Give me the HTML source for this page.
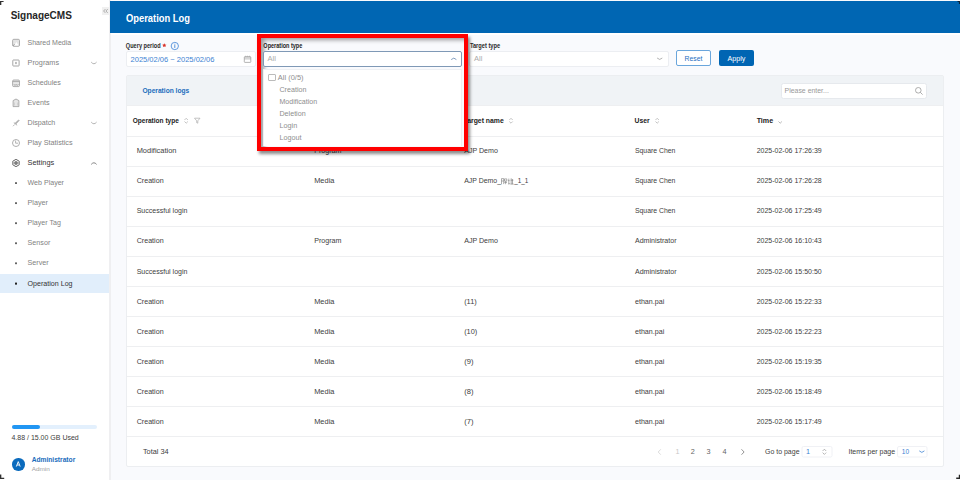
<!DOCTYPE html>
<html><head><meta charset="utf-8">
<style>
*{box-sizing:border-box;margin:0;padding:0}
html,body{width:960px;height:480px;overflow:hidden}
body{position:relative;background:#f9fafd;font-family:"Liberation Sans",sans-serif;color:#333;}
.b{position:absolute}
svg.ov{position:absolute;left:0;top:0;font-family:"Liberation Sans",sans-serif}
</style></head><body>
<!-- sidebar -->
<div class="b" style="left:0;top:0;width:111px;height:480px;background:#fff;border-right:2px solid #efeff1"></div>
<div class="b" style="left:102px;top:7px;width:7px;height:8px;background:#f0f0f0"></div>
<svg class="b" style="left:102px;top:7px" width="7" height="8" viewBox="0 0 7 8"><path d="M3.4 2.1L1.6 4l1.8 1.9M5.7 2.1L3.9 4l1.8 1.9" fill="none" stroke="#999" stroke-width="0.8"/></svg>
<div class="b" style="left:0;top:274px;width:109px;height:19px;background:#e1eefb"></div>
<svg class="b" style="left:0;top:0" width="110" height="300" viewBox="0 0 110 300">
 <g stroke="#9c9c9c" stroke-width="0.8">
  <rect x="12.6" y="39.3" width="6.9" height="7" rx="1.2" fill="#e4e4e4"/><path d="M14.2 45.6l2.2-3.6 2.2 3.6z" fill="#fff" stroke="none"/><path d="M13.2 45.8l1.3-1.6" stroke="#888"/>
  <rect x="12.8" y="60" width="6.3" height="6" rx="0.6" fill="none" stroke="#9c9c9c" stroke-width="0.9"/><rect x="15" y="61.9" width="1.9" height="2.2" fill="#bbb" stroke="none"/>
  <rect x="12.6" y="80" width="6.9" height="6.6" rx="1.2" fill="#e8e8e8"/><path d="M12.6 81.6h6.9" /><path d="M13.8 84l1.2 1.6 1.1-1.4 1.1 1.4 1.3-1.6" fill="none" stroke="#999" stroke-width="0.7"/>
  <path d="M13.1 100.6l2.9-1.6 2.9 1.6v6h-5.8z" fill="#e6e6e6"/><path d="M14.3 102.5v3M17.7 102.5v3" stroke="#bbb" stroke-width="0.6"/>
  <path d="M13 126.2l1.6-1.6M14.8 123.6l3.8-3.6.5.5-3.6 3.8zM13.8 122.8l1.2.4M16.8 125.4l-.4-1.2" fill="#bdbdbd" stroke="#9a9a9a" stroke-width="0.7"/>
  <circle cx="16" cy="143" r="3.5" fill="none" stroke="#a0a0a0" stroke-width="0.85"/><path d="M15.6 140.6v2.6h2.4" fill="none" stroke="#a0a0a0" stroke-width="0.8"/>
 </g>
 <g fill="none" stroke="#555" stroke-width="0.85">
  <path d="M16.00 159.30 L19.20 161.15 L19.20 164.85 L16.00 166.70 L12.80 164.85 L12.80 161.15z"/><circle cx="16" cy="163" r="1.3" fill="#aaa"/><path d="M16.65 161.87L17.55 160.32M17.30 163.00L19.10 163.00M16.65 164.13L17.55 165.68M15.35 164.13L14.45 165.68M14.70 163.00L12.90 163.00M15.35 161.87L14.45 160.32" stroke-width="0.6" stroke="#777"/>
 </g>
 <g fill="none" stroke-width="0.7">
  <path d="M91.2 62.1Q93.9 65.4 96.6 62.1" stroke="#a0a0a0" stroke-width="0.8"/>
  <path d="M91.2 122.1Q93.9 125.4 96.6 122.1" stroke="#a0a0a0" stroke-width="0.8"/>
  <path d="M91.2 164.4Q93.9 161.2 96.6 164.4" stroke="#666" stroke-width="0.8"/>
 </g>
 <g fill="#555"><rect x="15.1" y="182.20" width="1.8" height="1.8"/><rect x="15.1" y="202.25" width="1.8" height="1.8"/><rect x="15.1" y="222.30" width="1.8" height="1.8"/><rect x="15.1" y="242.35" width="1.8" height="1.8"/><rect x="15.1" y="262.40" width="1.8" height="1.8"/><rect x="15" y="282.6" width="2" height="2" fill="#222"/></g>
</svg>
<div class="b" style="left:12px;top:425px;width:85px;height:4px;border-radius:2px;background:#e3f0fd"></div>
<div class="b" style="left:12px;top:425px;width:28px;height:4px;border-radius:2px;background:#2196f3"></div>
<div class="b" style="left:12px;top:458px;width:12.5px;height:12.5px;border-radius:50%;background:#0b6bbd"></div>
<svg class="b" style="left:12px;top:458px" width="13" height="13" viewBox="0 0 13 13"><path d="M4.3 8.6L6.25 3.6 8.2 8.6M5 7h2.5" fill="none" stroke="#fff" stroke-width="0.9"/></svg>

<!-- header -->
<div class="b" style="left:110px;top:1px;width:850px;height:32px;background:#0066b3"></div>
<div class="b" style="left:111px;top:33px;width:849px;height:2px;background:#fff"></div>

<!-- filters -->
<svg class="b" style="left:160px;top:40px" width="24" height="12" viewBox="160 40 24 12">
 <path d="M164.3 43.3l.7 1.25 1.4.2-1.05.95.3 1.4-1.35-.7-1.35.7.3-1.4-1.05-.95 1.4-.2z" fill="#d9342b"/>
 <circle cx="174.8" cy="46" r="3.65" fill="none" stroke="#3b82d6" stroke-width="0.8"/>
 <path d="M174.8 45.1v2.8M174.8 43.8v0.8" stroke="#3b82d6" stroke-width="0.9"/>
</svg>
<div class="b" style="left:126px;top:51px;width:130px;height:16px;background:#fff;border:1px solid #eceef2;border-radius:2px"></div>
<svg class="b" style="left:242px;top:54px" width="11" height="10" viewBox="242 54 11 10"><rect x="244.4" y="57" width="6.4" height="2.6" fill="#d6d6d6"/><rect x="244.3" y="56.6" width="6.5" height="5.8" rx="0.7" fill="none" stroke="#8c8c8c" stroke-width="0.65"/><path d="M245.5 56.1h.6M247.3 56.1h.6M249.1 56.1h.6" stroke="#8c8c8c" stroke-width="0.6"/></svg>
<div class="b" style="left:469px;top:51px;width:199.5px;height:16px;background:#fff;border:1px solid #eceef2;border-radius:2px"></div>
<svg class="b" style="left:655px;top:55px" width="9" height="7" viewBox="655 55 9 7"><path d="M657.1 58Q659.7 60.9 662.3 58" fill="none" stroke="#a0a0a0" stroke-width="0.8"/></svg>
<div class="b" style="left:676px;top:50px;width:35px;height:16px;background:#fff;border:1px solid #6aa6dc;border-radius:2px"></div>
<div class="b" style="left:719px;top:50px;width:35px;height:16px;background:#0065b3;border-radius:2px"></div>

<!-- card -->
<div class="b" style="left:126px;top:75px;width:818px;height:392px;background:#fff;border:1px solid #eceef1;border-radius:2px"></div>
<div class="b" style="left:127px;top:76px;width:816px;height:29px;background:#f0f3f6"></div>
<div class="b" style="left:780.5px;top:82.5px;width:146.5px;height:16px;background:#fff;border:1px solid #e6e9ed;border-radius:2.5px"></div>
<svg class="b" style="left:914px;top:86px" width="10" height="10" viewBox="0 0 10 10"><g fill="none" stroke="#999" stroke-width="0.8"><circle cx="4.3" cy="4.3" r="2.8"/><path d="M6.3 6.3l2.3 2.3"/></g></svg>
<svg class="b" style="left:127px;top:105px" width="816" height="332" viewBox="127 105 816 332">
 <g fill="#eeeff1">
  <rect x="127" y="105" width="816" height="1"/>
  <rect x="127" y="136" width="816" height="1"/><rect x="127" y="166" width="816" height="1"/><rect x="127" y="196" width="816" height="1"/>
  <rect x="127" y="226" width="816" height="1"/><rect x="127" y="256" width="816" height="1"/><rect x="127" y="286" width="816" height="1"/>
  <rect x="127" y="316" width="816" height="1"/><rect x="127" y="346" width="816" height="1"/><rect x="127" y="376" width="816" height="1"/>
  <rect x="127" y="406" width="816" height="1"/><rect x="127" y="436" width="816" height="1"/>
 </g>
 <g fill="none" stroke="#aaa" stroke-width="0.7">
  <path d="M184.5 120l1.7-1.7 1.7 1.7M184.5 121.5l1.7 1.7 1.7-1.7"/>
  <path d="M194.5 118.2h5.5l-2.2 2.6v2.4l-1.1-.5v-1.9z"/>
  <path d="M509.3 120l1.7-1.7 1.7 1.7M509.3 121.5l1.7 1.7 1.7-1.7"/>
  <path d="M655.5 120l1.7-1.7 1.7 1.7M655.5 121.5l1.7 1.7 1.7-1.7"/>
  <path d="M778.5 121.5l1.7 1.7 1.7-1.7" stroke="#999"/>
 </g>
 <g fill="none" stroke="#777" stroke-width="0.6">
  <path d="M501.5 178.6h2.2v5.5M501.5 178.6v5.5M501.5 181h2.2M504.5 178.9h2.3v2.2h-2.3zM504.3 182.4h2.7M505.6 181.2v3"/>
  <path d="M508.8 178.6v5.4M508.2 180.6h1.3M508.2 184.1l1.8-.5M511.2 178.3v5.8M510.6 180.2h2.8M510.4 184.1h3.3M512.5 179.1v5"/>
 </g>
</svg>
<!-- footer controls -->
<svg class="b" style="left:650px;top:440px" width="290" height="22" viewBox="650 440 290 22">
 <path d="M660.8 449.3l-2.6 2.7 2.6 2.7" fill="none" stroke="#ccc" stroke-width="0.7"/>
 <path d="M741.5 449.3l2.6 2.7-2.6 2.7" fill="none" stroke="#666" stroke-width="0.7"/>
 <rect x="802" y="446.5" width="30" height="10.5" rx="1.5" fill="#fff" stroke="#eceef2" stroke-width="0.8"/>
 <path d="M822.6 451l1.8-1.8 1.8 1.8M822.6 452.6l1.8 1.8 1.8-1.8" fill="none" stroke="#888" stroke-width="0.6"/>
 <rect x="897.5" y="446.5" width="29.5" height="10.5" rx="1.5" fill="#fff" stroke="#eceef2" stroke-width="0.8"/>
 <path d="M919.3 450.9Q921.8 453.9 924.4 450.9" fill="none" stroke="#3d83d3" stroke-width="0.8"/>
</svg>

<svg class="ov" width="960" height="480" viewBox="0 0 960 480">
<text x="10.64" y="19.20" font-size="10.2" fill="#262626" font-weight="bold" textLength="61.22" lengthAdjust="spacingAndGlyphs">SignageCMS</text>
<text x="27.56" y="44.90" font-size="7.27" fill="#828282" textLength="43.67" lengthAdjust="spacingAndGlyphs">Shared Media</text>
<text x="27.56" y="64.95" font-size="7.27" fill="#828282" textLength="31.47" lengthAdjust="spacingAndGlyphs">Programs</text>
<text x="27.56" y="85.00" font-size="7.27" fill="#828282" textLength="33.17" lengthAdjust="spacingAndGlyphs">Schedules</text>
<text x="27.56" y="105.05" font-size="7.27" fill="#828282" textLength="21.98" lengthAdjust="spacingAndGlyphs">Events</text>
<text x="27.56" y="125.10" font-size="7.27" fill="#828282" textLength="27.74" lengthAdjust="spacingAndGlyphs">Dispatch</text>
<text x="27.56" y="145.15" font-size="7.27" fill="#828282" textLength="45.07" lengthAdjust="spacingAndGlyphs">Play Statistics</text>
<text x="27.56" y="165.20" font-size="7.27" fill="#333" textLength="26.67" lengthAdjust="spacingAndGlyphs">Settings</text>
<text x="27.56" y="185.25" font-size="7.27" fill="#828282" textLength="36.42" lengthAdjust="spacingAndGlyphs">Web Player</text>
<text x="27.56" y="205.30" font-size="7.27" fill="#828282" textLength="20.45" lengthAdjust="spacingAndGlyphs">Player</text>
<text x="27.56" y="225.35" font-size="7.27" fill="#828282" textLength="33.36" lengthAdjust="spacingAndGlyphs">Player Tag</text>
<text x="27.56" y="245.40" font-size="7.27" fill="#828282" textLength="22.75" lengthAdjust="spacingAndGlyphs">Sensor</text>
<text x="27.56" y="265.45" font-size="7.27" fill="#828282" textLength="21.21" lengthAdjust="spacingAndGlyphs">Server</text>
<text x="27.56" y="285.50" font-size="7.27" fill="#333" textLength="45.02" lengthAdjust="spacingAndGlyphs">Operation Log</text>
<text x="11.46" y="439.80" font-size="7.27" fill="#404040" textLength="67.27" lengthAdjust="spacingAndGlyphs">4.88 / 15.00 GB Used</text>
<text x="31.66" y="462.20" font-size="7.27" fill="#1a6cbc" font-weight="bold" textLength="43.57" lengthAdjust="spacingAndGlyphs">Administrator</text>
<text x="31.75" y="471.20" font-size="5.8" fill="#a0a0a0" textLength="18.10" lengthAdjust="spacingAndGlyphs">Admin</text>
<text x="126.05" y="21.80" font-size="10.9" fill="#fff" font-weight="bold" textLength="63.81" lengthAdjust="spacingAndGlyphs">Operation Log</text>
<text x="125.84" y="48.00" font-size="6.8" fill="#2a2a2a" font-weight="bold" textLength="34.82" lengthAdjust="spacingAndGlyphs">Query period</text>
<text x="469.89" y="48.00" font-size="6.8" fill="#2a2a2a" font-weight="bold" textLength="30.22" lengthAdjust="spacingAndGlyphs">Target type</text>
<text x="130.52" y="62.00" font-size="8" fill="#3d83d3" textLength="83.96" lengthAdjust="spacingAndGlyphs">2025/02/06 ~ 2025/02/06</text>
<text x="473.96" y="60.80" font-size="7.27" fill="#aaa" textLength="8.37" lengthAdjust="spacingAndGlyphs">All</text>
<text x="684.54" y="60.60" font-size="7.6" fill="#1f6fbf" textLength="17.91" lengthAdjust="spacingAndGlyphs">Reset</text>
<text x="727.54" y="60.60" font-size="7.6" fill="#fff" textLength="17.91" lengthAdjust="spacingAndGlyphs">Apply</text>
<text x="142.43" y="92.90" font-size="7.8" fill="#1a6cbc" font-weight="bold" textLength="46.79" lengthAdjust="spacingAndGlyphs">Operation logs</text>
<text x="784.56" y="93.00" font-size="7.27" fill="#999" textLength="44.27" lengthAdjust="spacingAndGlyphs">Please enter...</text>
<text x="132.76" y="123.30" font-size="7.27" fill="#222" font-weight="bold" textLength="46.07" lengthAdjust="spacingAndGlyphs">Operation type</text>
<text x="463.56" y="123.30" font-size="7.27" fill="#222" font-weight="bold" textLength="40.17" lengthAdjust="spacingAndGlyphs">Target name</text>
<text x="634.56" y="123.30" font-size="7.27" fill="#222" font-weight="bold" textLength="15.07" lengthAdjust="spacingAndGlyphs">User</text>
<text x="756.66" y="123.30" font-size="7.27" fill="#222" font-weight="bold" textLength="16.47" lengthAdjust="spacingAndGlyphs">Time</text>
<text x="136.66" y="153.30" font-size="7.27" fill="#404040" textLength="39.77" lengthAdjust="spacingAndGlyphs">Modification</text>
<text x="314.16" y="153.30" font-size="7.27" fill="#404040" textLength="27.35" lengthAdjust="spacingAndGlyphs">Program</text>
<text x="464.16" y="153.30" font-size="7.27" fill="#404040" textLength="33.73" lengthAdjust="spacingAndGlyphs">AJP Demo</text>
<text x="634.96" y="153.30" font-size="7.27" fill="#404040" textLength="40.47" lengthAdjust="spacingAndGlyphs">Square Chen</text>
<text x="756.66" y="153.30" font-size="7.27" fill="#404040" textLength="65.07" lengthAdjust="spacingAndGlyphs">2025-02-06 17:26:39</text>
<text x="136.66" y="183.35" font-size="7.27" fill="#404040" textLength="26.97" lengthAdjust="spacingAndGlyphs">Creation</text>
<text x="314.16" y="183.35" font-size="7.27" fill="#404040" textLength="20.27" lengthAdjust="spacingAndGlyphs">Media</text>
<text x="464.16" y="183.35" font-size="7.27" fill="#404040" textLength="36.87" lengthAdjust="spacingAndGlyphs">AJP Demo_</text>
<text x="514.16" y="183.35" font-size="7.27" fill="#404040" textLength="14.17" lengthAdjust="spacingAndGlyphs">_1_1</text>
<text x="634.96" y="183.35" font-size="7.27" fill="#404040" textLength="40.47" lengthAdjust="spacingAndGlyphs">Square Chen</text>
<text x="756.66" y="183.35" font-size="7.27" fill="#404040" textLength="65.07" lengthAdjust="spacingAndGlyphs">2025-02-06 17:26:28</text>
<text x="136.66" y="213.40" font-size="7.27" fill="#404040" textLength="50.76" lengthAdjust="spacingAndGlyphs">Successful login</text>
<text x="634.96" y="213.40" font-size="7.27" fill="#404040" textLength="40.47" lengthAdjust="spacingAndGlyphs">Square Chen</text>
<text x="756.66" y="213.40" font-size="7.27" fill="#404040" textLength="65.07" lengthAdjust="spacingAndGlyphs">2025-02-06 17:25:49</text>
<text x="136.66" y="243.45" font-size="7.27" fill="#404040" textLength="26.97" lengthAdjust="spacingAndGlyphs">Creation</text>
<text x="314.16" y="243.45" font-size="7.27" fill="#404040" textLength="27.35" lengthAdjust="spacingAndGlyphs">Program</text>
<text x="464.16" y="243.45" font-size="7.27" fill="#404040" textLength="33.73" lengthAdjust="spacingAndGlyphs">AJP Demo</text>
<text x="634.96" y="243.45" font-size="7.27" fill="#404040" textLength="41.54" lengthAdjust="spacingAndGlyphs">Administrator</text>
<text x="756.66" y="243.45" font-size="7.27" fill="#404040" textLength="65.07" lengthAdjust="spacingAndGlyphs">2025-02-06 16:10:43</text>
<text x="136.66" y="273.50" font-size="7.27" fill="#404040" textLength="50.76" lengthAdjust="spacingAndGlyphs">Successful login</text>
<text x="634.96" y="273.50" font-size="7.27" fill="#404040" textLength="41.54" lengthAdjust="spacingAndGlyphs">Administrator</text>
<text x="756.66" y="273.50" font-size="7.27" fill="#404040" textLength="65.07" lengthAdjust="spacingAndGlyphs">2025-02-06 15:50:50</text>
<text x="136.66" y="303.55" font-size="7.27" fill="#404040" textLength="26.97" lengthAdjust="spacingAndGlyphs">Creation</text>
<text x="314.16" y="303.55" font-size="7.27" fill="#404040" textLength="20.27" lengthAdjust="spacingAndGlyphs">Media</text>
<text x="464.16" y="303.55" font-size="7.27" fill="#404040" textLength="12.64" lengthAdjust="spacingAndGlyphs">(11)</text>
<text x="634.96" y="303.55" font-size="7.27" fill="#404040" textLength="29.28" lengthAdjust="spacingAndGlyphs">ethan.pai</text>
<text x="756.66" y="303.55" font-size="7.27" fill="#404040" textLength="65.07" lengthAdjust="spacingAndGlyphs">2025-02-06 15:22:33</text>
<text x="136.66" y="333.60" font-size="7.27" fill="#404040" textLength="26.97" lengthAdjust="spacingAndGlyphs">Creation</text>
<text x="314.16" y="333.60" font-size="7.27" fill="#404040" textLength="20.27" lengthAdjust="spacingAndGlyphs">Media</text>
<text x="464.16" y="333.60" font-size="7.27" fill="#404040" textLength="13.15" lengthAdjust="spacingAndGlyphs">(10)</text>
<text x="634.96" y="333.60" font-size="7.27" fill="#404040" textLength="29.28" lengthAdjust="spacingAndGlyphs">ethan.pai</text>
<text x="756.66" y="333.60" font-size="7.27" fill="#404040" textLength="65.07" lengthAdjust="spacingAndGlyphs">2025-02-06 15:22:23</text>
<text x="136.66" y="363.65" font-size="7.27" fill="#404040" textLength="26.97" lengthAdjust="spacingAndGlyphs">Creation</text>
<text x="314.16" y="363.65" font-size="7.27" fill="#404040" textLength="20.27" lengthAdjust="spacingAndGlyphs">Media</text>
<text x="464.16" y="363.65" font-size="7.27" fill="#404040" textLength="9.32" lengthAdjust="spacingAndGlyphs">(9)</text>
<text x="634.96" y="363.65" font-size="7.27" fill="#404040" textLength="29.28" lengthAdjust="spacingAndGlyphs">ethan.pai</text>
<text x="756.66" y="363.65" font-size="7.27" fill="#404040" textLength="65.07" lengthAdjust="spacingAndGlyphs">2025-02-06 15:19:35</text>
<text x="136.66" y="393.70" font-size="7.27" fill="#404040" textLength="26.97" lengthAdjust="spacingAndGlyphs">Creation</text>
<text x="314.16" y="393.70" font-size="7.27" fill="#404040" textLength="20.27" lengthAdjust="spacingAndGlyphs">Media</text>
<text x="464.16" y="393.70" font-size="7.27" fill="#404040" textLength="9.32" lengthAdjust="spacingAndGlyphs">(8)</text>
<text x="634.96" y="393.70" font-size="7.27" fill="#404040" textLength="29.28" lengthAdjust="spacingAndGlyphs">ethan.pai</text>
<text x="756.66" y="393.70" font-size="7.27" fill="#404040" textLength="65.07" lengthAdjust="spacingAndGlyphs">2025-02-06 15:18:49</text>
<text x="136.66" y="423.75" font-size="7.27" fill="#404040" textLength="26.97" lengthAdjust="spacingAndGlyphs">Creation</text>
<text x="314.16" y="423.75" font-size="7.27" fill="#404040" textLength="20.27" lengthAdjust="spacingAndGlyphs">Media</text>
<text x="464.16" y="423.75" font-size="7.27" fill="#404040" textLength="9.32" lengthAdjust="spacingAndGlyphs">(7)</text>
<text x="634.96" y="423.75" font-size="7.27" fill="#404040" textLength="29.28" lengthAdjust="spacingAndGlyphs">ethan.pai</text>
<text x="756.66" y="423.75" font-size="7.27" fill="#404040" textLength="65.07" lengthAdjust="spacingAndGlyphs">2025-02-06 15:17:49</text>
<text x="142.96" y="454.30" font-size="7.27" fill="#404040" textLength="25.67" lengthAdjust="spacingAndGlyphs">Total 34</text>
<text x="675.56" y="454.30" font-size="7.27" fill="#c8c8c8">1</text>
<text x="690.66" y="454.30" font-size="7.27" fill="#666">2</text>
<text x="706.56" y="454.30" font-size="7.27" fill="#666">3</text>
<text x="722.56" y="454.30" font-size="7.27" fill="#666">4</text>
<text x="764.96" y="454.30" font-size="7.27" fill="#404040" textLength="34.57" lengthAdjust="spacingAndGlyphs">Go to page</text>
<text x="805.96" y="454.30" font-size="7.27" fill="#3d83d3">1</text>
<text x="848.46" y="454.30" font-size="7.27" fill="#404040" textLength="46.67" lengthAdjust="spacingAndGlyphs">Items per page</text>
<text x="901.86" y="454.30" font-size="7.27" fill="#3d83d3" textLength="7.32" lengthAdjust="spacingAndGlyphs">10</text>
</svg>

<!-- dropdown popup with red highlight -->
<div class="b" style="left:257px;top:34px;width:211px;height:117px;border:4px solid #f00;background:#f9fafd;box-shadow:2px 3px 3px rgba(0,0,0,0.45), inset 4px 3px 4px -1px rgba(0,0,0,0.38)"></div>
<div class="b" style="left:263px;top:51px;width:199px;height:16px;background:#fff;border:1px solid #7f99b6;border-radius:2px"></div>
<svg class="b" style="left:449px;top:55px" width="10" height="7" viewBox="449 55 10 7"><path d="M451.2 59.6Q453.8 56.6 456.4 59.6" fill="none" stroke="#6b8db5" stroke-width="0.85"/></svg>
<div class="b" style="left:263px;top:69px;width:199px;height:77px;background:#fff;border:1px solid #eef0f3;border-bottom:none"></div>
<div class="b" style="left:268.3px;top:74.1px;width:7.5px;height:7.2px;border:0.8px solid #bbb;border-radius:1px;background:#fff"></div>
<svg class="ov" width="960" height="480" viewBox="0 0 960 480">
<text x="267.56" y="60.90" font-size="7.27" fill="#aaa" textLength="8.37" lengthAdjust="spacingAndGlyphs">All</text>
<text x="277.86" y="79.50" font-size="7.27" fill="#8e8e8e" textLength="25.67" lengthAdjust="spacingAndGlyphs">All (0/5)</text>
<text x="279.46" y="91.90" font-size="7.27" fill="#8e8e8e" textLength="26.97" lengthAdjust="spacingAndGlyphs">Creation</text>
<text x="279.46" y="103.94" font-size="7.27" fill="#8e8e8e" textLength="37.71" lengthAdjust="spacingAndGlyphs">Modification</text>
<text x="279.46" y="115.97" font-size="7.27" fill="#8e8e8e" textLength="26.21" lengthAdjust="spacingAndGlyphs">Deletion</text>
<text x="279.46" y="128.01" font-size="7.27" fill="#8e8e8e" textLength="17.76" lengthAdjust="spacingAndGlyphs">Login</text>
<text x="279.46" y="140.04" font-size="7.27" fill="#8e8e8e" textLength="21.99" lengthAdjust="spacingAndGlyphs">Logout</text>
<text x="263.34" y="48.10" font-size="6.8" fill="#222" font-weight="bold" textLength="38.97" lengthAdjust="spacingAndGlyphs">Operation type</text>
</svg>
<!-- screenshot corner artifacts -->
<svg class="b" style="left:0;top:0" width="960" height="480" viewBox="0 0 960 480">
 <g fill="#111" filter="url(#bl)">
  <path d="M0 0.9h3.6v1.2H1.3V5H0z" opacity="0.85"/>
  <path d="M0 474.6h1.3v3.1h2.9V479H0z" opacity="0.85"/>
  <path d="M960 474.8h-1.2v2.8h-2.6V479H960z" opacity="0.9"/>
  <path d="M957.6 0.9H960V4h-1.1V2.1h-1.3z" opacity="0.75"/>
 </g>
 <defs><filter id="bl" x="-1" y="-1" width="3" height="3"><feGaussianBlur stdDeviation="0.35"/></filter></defs>
</svg>
</body></html>
